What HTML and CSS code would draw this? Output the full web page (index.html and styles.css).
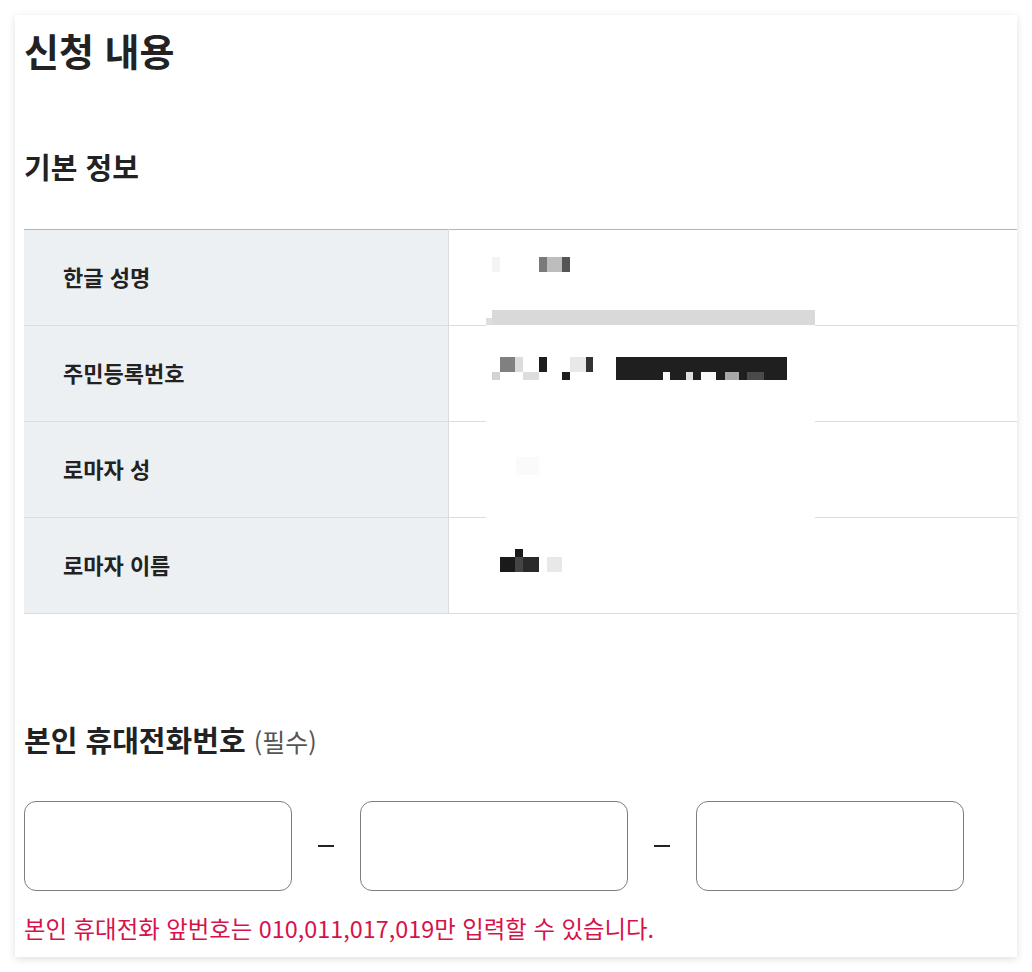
FILE: index.html
```html
<!DOCTYPE html>
<html lang="ko">
<head>
    <meta charset="UTF-8">
    <meta name="viewport" content="width=device-width, initial-scale=1.0">
    <title>신청 내용</title>
    <link rel="stylesheet" href="styles.css">
</head>
<body>

<div class="card">
    <h1 class="page-title">신청 내용</h1>

    <h2 class="section-title">기본 정보</h2>

    <div class="info-wrap">
        <table class="info-table">
            <tr>
                <th>한글 성명</th>
                <td></td>
            </tr>
            <tr>
                <th>주민등록번호</th>
                <td></td>
            </tr>
            <tr>
                <th>로마자 성</th>
                <td></td>
            </tr>
            <tr>
                <th>로마자 이름</th>
                <td></td>
            </tr>
        </table>

        <!-- masked personal data -->
        <svg class="mask" width="330" height="384" viewBox="0 0 330 384">
            <rect x="0" y="95" width="329" height="197" fill="#fff"/>
            <!-- row 1 -->
            <rect x="6" y="28" width="8" height="15" fill="#f4f4f4"/>
            <rect x="53" y="28" width="8" height="15" fill="#7a7a7a"/>
            <rect x="61" y="28" width="15" height="15" fill="#bdbdbd"/>
            <rect x="76" y="28" width="8" height="15" fill="#555"/>
            <rect x="6" y="81" width="323" height="15" fill="#d9d9d9"/>
            <rect x="0" y="89" width="6" height="7" fill="#dedede"/>
            <!-- row 2 -->
            <rect x="14" y="128" width="15" height="15" fill="#808080"/>
            <rect x="29" y="128" width="8" height="15" fill="#dcdcdc"/>
            <rect x="53" y="128" width="8" height="15" fill="#1e1e1e"/>
            <rect x="84" y="128" width="16" height="15" fill="#e8e8e8"/>
            <rect x="100" y="128" width="7" height="15" fill="#333"/>
            <rect x="6" y="143" width="8" height="8" fill="#d3d3d3"/>
            <rect x="37" y="143" width="16" height="8" fill="#dddddd"/>
            <rect x="76" y="143" width="8" height="8" fill="#1e1e1e"/>
            <rect x="130" y="128" width="171" height="23" fill="#1f1f1f"/>
            <rect x="177" y="143" width="7" height="8" fill="#fafafa"/>
            <rect x="200" y="143" width="7" height="8" fill="#dddddd"/>
            <rect x="215" y="143" width="15" height="8" fill="#f8f8f8"/>
            <rect x="239" y="143" width="14" height="8" fill="#a8a8a8"/>
            <rect x="261" y="143" width="17" height="8" fill="#4a4a4a"/>
            <!-- row 3 -->
            <rect x="30" y="228" width="23" height="18" fill="#fafafa"/>
            <!-- row 4 -->
            <rect x="29" y="320" width="8" height="8" fill="#1a1a1a"/>
            <rect x="14" y="328" width="15" height="15" fill="#1a1a1a"/>
            <rect x="29" y="328" width="8" height="15" fill="#444"/>
            <rect x="37" y="328" width="16" height="15" fill="#2a2a2a"/>
            <rect x="61" y="328" width="15" height="15" fill="#e8e8e8"/>
        </svg>
    </div>

    <h3 class="phone-title">본인 휴대전화번호 <span class="required">(필수)</span></h3>

    <div class="phone-row">
        <input class="phone-input" type="text">
        <span class="dash"></span>
        <input class="phone-input" type="text">
        <span class="dash"></span>
        <input class="phone-input" type="text">
    </div>

    <p class="error-text">본인 휴대전화 앞번호는 010,011,017,019만 입력할 수 있습니다.</p>
</div>

</body>
</html>
```

FILE: styles.css
```css
* {
    margin: 0;
    padding: 0;
    box-sizing: border-box;
}

html, body {
    background-color: #fff;
    font-family: "Noto Sans CJK KR", "Noto Sans", sans-serif;
    color: #222;
}

body {
    padding: 15px;
}

.card {
    width: 1002px;
    height: 942px;
    padding: 10px 0 15px 9px;
    background: #fff;
    box-shadow: 0 2px 8px rgba(0, 0, 0, 0.13);
}

.page-title {
    font-size: 38px;
    font-weight: 700;
    line-height: 50px;
}

.section-title {
    margin-top: 71px;
    font-size: 29px;
    font-weight: 700;
    line-height: 40px;
}

.info-wrap {
    position: relative;
    margin-top: 43px;
}

.info-table {
    width: 100%;
    border-collapse: collapse;
    border-top: 1px solid #a9b8c8;
}

.info-table th,
.info-table td {
    height: 96px;
    border-bottom: 1px solid #dcdcdc;
    vertical-align: middle;
}

.info-table th {
    width: 424px;
    padding-left: 39px;
    padding-bottom: 3px;
    background: #ecf0f3;
    border-right: 1px solid #dcdcdc;
    text-align: left;
    font-size: 22px;
    font-weight: 700;
    color: #222;
}

.mask {
    position: absolute;
    top: 0;
    left: 462px;
}

.phone-title {
    margin-top: 105px;
    font-size: 29px;
    font-weight: 700;
    line-height: 40px;
}

.required {
    font-size: 25px;
    font-weight: 400;
    color: #555;
}

.phone-row {
    display: flex;
    align-items: center;
    margin-top: 40px;
}

.phone-input {
    width: 268px;
    height: 90px;
    border: 1px solid #7e7e7e;
    border-radius: 12px;
    background: #fff;
    outline: none;
}

.dash {
    display: flex;
    justify-content: center;
    width: 68px;
}

.dash::before {
    content: "";
    width: 16px;
    height: 2px;
    background: #222;
}

.error-text {
    margin-top: 21px;
    font-size: 23.4px;
    line-height: 32px;
    color: #d6124a;
}
```
